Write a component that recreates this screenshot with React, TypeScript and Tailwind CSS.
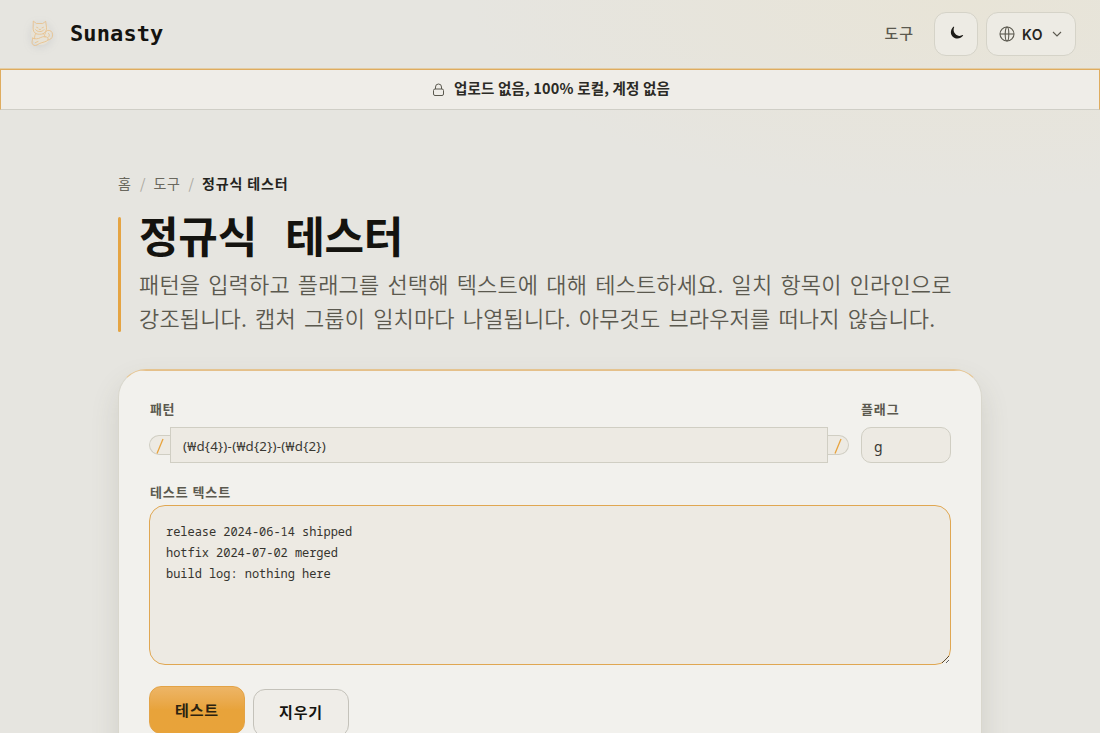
import React from "react";

const kr = "font-['Noto_Sans_CJK_KR',sans-serif]";

function CatLogo() {
  return (
    <svg width="36" height="36" viewBox="0 0 36 36" fill="none" stroke="#e8be85" strokeWidth="0.8" strokeLinejoin="round" strokeLinecap="round" className="drop-shadow-[0_2px_4px_rgba(90,100,120,0.15)]">
      <ellipse cx="19" cy="18" rx="10" ry="11" fill="#e7e2d6" stroke="none" />
      <path d="M11.600 5.300 14.500 7.500h6.200l3-2.200.8 6.300c.3 3-1.400 5.200-3.600 6.200-1.600.6-5 .6-6.600 0-2.200-1-3.400-3.200-3.200-6.200z" />
      <path d="M14 17.500c-1.200 1.200-1.600 3-1.400 5M21.300 17.600c1 1 1.600 2.200 1.700 3.600M13.600 13.700c1.800 2.600 6.600 2.600 8.400 0" />
      <path d="M23 18c.2-2.600 2-4 4.200-3.600 2.600.4 3.800 3 3.300 5.700-.5 2.500-2.500 3.800-4.700 4M10.800 22.200c2 1 5 1 8-.7 2.400-1.200 5-1.400 6.800.2 1 1.200.6 2.400-1 3.300-3 1.600-6.600 1.600-9.600 4-1.800 1.200-4.600.2-4.900-1.800-.3-1.800.5-3.200.7-5z" />
      <path d="M14.600 11.300l1.400.6M20 11.900l1.400-.6M17.300 13.400h1.200M26.600 17.400c1.200 1 1 3-.4 4M13.500 26.500l2.500-1" />
    </svg>
  );
}

function Header() {
  return (
    <header className="flex h-[69px] items-center justify-between border-b border-[#e4cda4] pr-6 pl-[22px]">
      <div className="flex items-center gap-3">
        <CatLogo />
        <span className="font-['DejaVu_Sans_Mono',monospace] text-[22px] leading-8 font-bold tracking-[0.100px] text-[#14130f]">Sunasty</span>
      </div>
      <div className="flex items-center">
        <span className="relative -top-px mr-5 text-[15px] font-medium tracking-[0.900px] text-[#5b594f]">도구</span>
        <button className="mr-2 flex h-11 w-11 items-center justify-center rounded-xl border border-[#d5d3c8] bg-[#edebe4]">
          <svg className="mb-[2px] ml-[2px]" width="16" height="16" viewBox="0 0 16 16" fill="#1c1b17">
            <path d="M4.800 1.500C1.500 4.300 1 8.500 3.300 11.200c2.900 3.300 8.200 3 10.900-.6l-.4-.5c-3 1.500-5.800.8-7.600-1.300C4.400 6.700 4.200 4.300 5.200 1.900Z" />
          </svg>
        </button>
        <button className="flex h-11 w-[90px] items-center rounded-xl border border-[#d5d3c8] bg-[#edebe4] pl-3">
          <svg width="16" height="16" viewBox="0 0 16 16" fill="none" stroke="#5b594f" strokeWidth="1.100">
            <circle cx="8" cy="8" r="7" />
            <ellipse cx="8" cy="8" rx="1.800" ry="7" />
            <path d="M1 8h14" />
          </svg>
          <span className="ml-[7px] font-['Inter',sans-serif] text-[14px] font-semibold tracking-[0.500px] text-[#26251f]">KO</span>
          <svg className="ml-[9px]" width="10" height="10" viewBox="0 0 10 10" fill="none" stroke="#5b594f" strokeWidth="1.100">
            <path d="m1 3 4 4 4-4" />
          </svg>
        </button>
      </div>
    </header>
  );
}

function Notice() {
  return (
    <div className="flex h-[41px] items-center justify-center border border-[#dfac5f] border-b-[#cfcec6] bg-[#efede8] pb-[3px] text-[14.500px] font-bold tracking-[0.180px] text-[#2b2a25]">
      <svg className="mt-[3px] mr-[9px] ml-[2px]" width="13" height="14" viewBox="0 0 13 14" fill="none" stroke="#5b594f" strokeWidth="1">
        <rect x="1.500" y="6" width="10" height="6.500" rx="1.500" />
        <path d="M3.500 6V4a3 3 0 0 1 6 0v2" />
      </svg>
      <span>업로드 없음, 100% 로컬, 계정 없음</span>
    </div>
  );
}

function Slash({ side }: { side: "left" | "right" }) {
  const shape = side === "left" ? "rounded-l-full border-r-0" : "rounded-r-full border-l-0";
  return (
    <span className={`flex h-5 w-[21px] items-center justify-center border border-[#d0cec3] bg-[#edeae3] ${shape}`}>
      <svg className="mt-[2px]" width="8" height="16" viewBox="0 0 8 16" stroke="#e8a33d" strokeWidth="1.300">
        <path d="M1 15.500 7 1" />
      </svg>
    </span>
  );
}

function PatternForm() {
  return (
    <section className="h-[420px] overflow-hidden rounded-t-[28px] border border-[#d9d7cd] border-t-[#e5c490] bg-[#f2f1ed] shadow-[0_14px_28px_rgba(90,85,60,0.15)]">
      <div className="h-px bg-[#e5c08a]" />
      <div className="px-[30px] pt-[30px]">
        <div className="flex gap-3">
          <div className="flex w-[700px] flex-col">
            <label className="h-[26px] pl-px text-[13px] leading-[16px] font-bold tracking-[0.500px] text-[#5b594f]">패턴</label>
            <div className="flex items-center">
              <Slash side="left" />
              <div className="flex h-9 flex-1 items-center border border-[#d0cec3] bg-[#edeae3] pt-[3px] pl-3 font-['Noto_Sans','Noto_Sans_CJK_KR',sans-serif] text-[13.300px] tracking-[0.260px] text-[#3a3933]">
                (₩d{"{4}"})-(₩d{"{2}"})-(₩d{"{2}"})
              </div>
              <Slash side="right" />
            </div>
          </div>
          <div className="flex w-[90px] flex-col">
            <label className="h-[26px] text-[13px] leading-[16px] font-bold tracking-[0.900px] text-[#5b594f]">플래그</label>
            <div className="flex h-9 items-center rounded-[10px] border border-[#d0cec3] bg-[#edeae3] pt-[2px] pl-3 font-['Noto_Sans',sans-serif] text-[14px] text-[#3a3933]">g</div>
          </div>
        </div>
        <label className="mt-[21px] block h-[21px] pl-px text-[13px] leading-[16px] font-bold tracking-[0.900px] text-[#5b594f]">테스트 텍스트</label>
        <textarea
          className="block h-[160px] w-[802px] resize rounded-2xl border border-[#e0a752] bg-[#edeae3] px-4 py-[15px] font-['Noto_Sans_Mono','DejaVu_Sans_Mono',monospace] text-[12px] leading-[21px] tracking-[-0.040px] text-[#35342e] outline-none"
          defaultValue={"release 2024-06-14 shipped\nhotfix 2024-07-02 merged\nbuild log: nothing here"}
        />
        <div className="mt-[21px] flex gap-2">
          <button className="h-12 w-24 rounded-xl border border-[#e3a346] bg-linear-to-b from-[#edb566] to-[#e8a33a] to-50% text-[15px] font-bold tracking-[0.900px] text-[#2b2210]">테스트</button>
          <button className="mt-[3px] h-12 w-24 rounded-xl border border-[#c4c2ba] bg-[#efede8] pb-[2px] text-[15px] font-bold tracking-[0.900px] text-[#14130f]">지우기</button>
        </div>
      </div>
    </section>
  );
}

export default function App() {
  return (
    <div className={`h-[733px] overflow-hidden bg-[#e6e5e0] bg-[radial-gradient(ellipse_500px_200px_at_88%_0%,#e8e4d7_0%,transparent_100%)] ${kr}`}>
      <Header />
      <Notice />
      <main className="mx-auto w-[864px]">
        <nav className="mt-[61px] flex h-6 items-center text-[14px] text-[#6a685e]">
          <span>홈</span>
          <span className="ml-[9px] mr-[8px] text-[#aaa89f]">/</span>
          <span className="tracking-[0.700px]">도구</span>
          <span className="mx-[8px] text-[#aaa89f]">/</span>
          <span className="font-bold tracking-[0.850px] text-[#24231e]">정규식 테스터</span>
        </nav>
        <div className="mt-[22px] mb-[37px] flex h-[115px]">
          <span className="w-[3px] rounded-full bg-[#e5a443]" />
          <div className="ml-[18px]">
            <h1 className="h-[49px] text-[43px] leading-[34px] font-bold tracking-[-0.200px] text-[#14130f] [word-spacing:18.500px]">정규식 테스터</h1>
            <p className="text-[22px] leading-[34px] font-[350] tracking-[0.150px] whitespace-nowrap text-[#5b594f] [word-spacing:3px]">
              패턴을 입력하고 플래그를 선택해 텍스트에 대해 테스트하세요. 일치 항목이 인라인으로<br />
              강조됩니다. 캡처 그룹이 일치마다 나열됩니다. 아무것도 브라우저를 떠나지 않습니다.
            </p>
          </div>
        </div>
        <PatternForm />
      </main>
    </div>
  );
}
